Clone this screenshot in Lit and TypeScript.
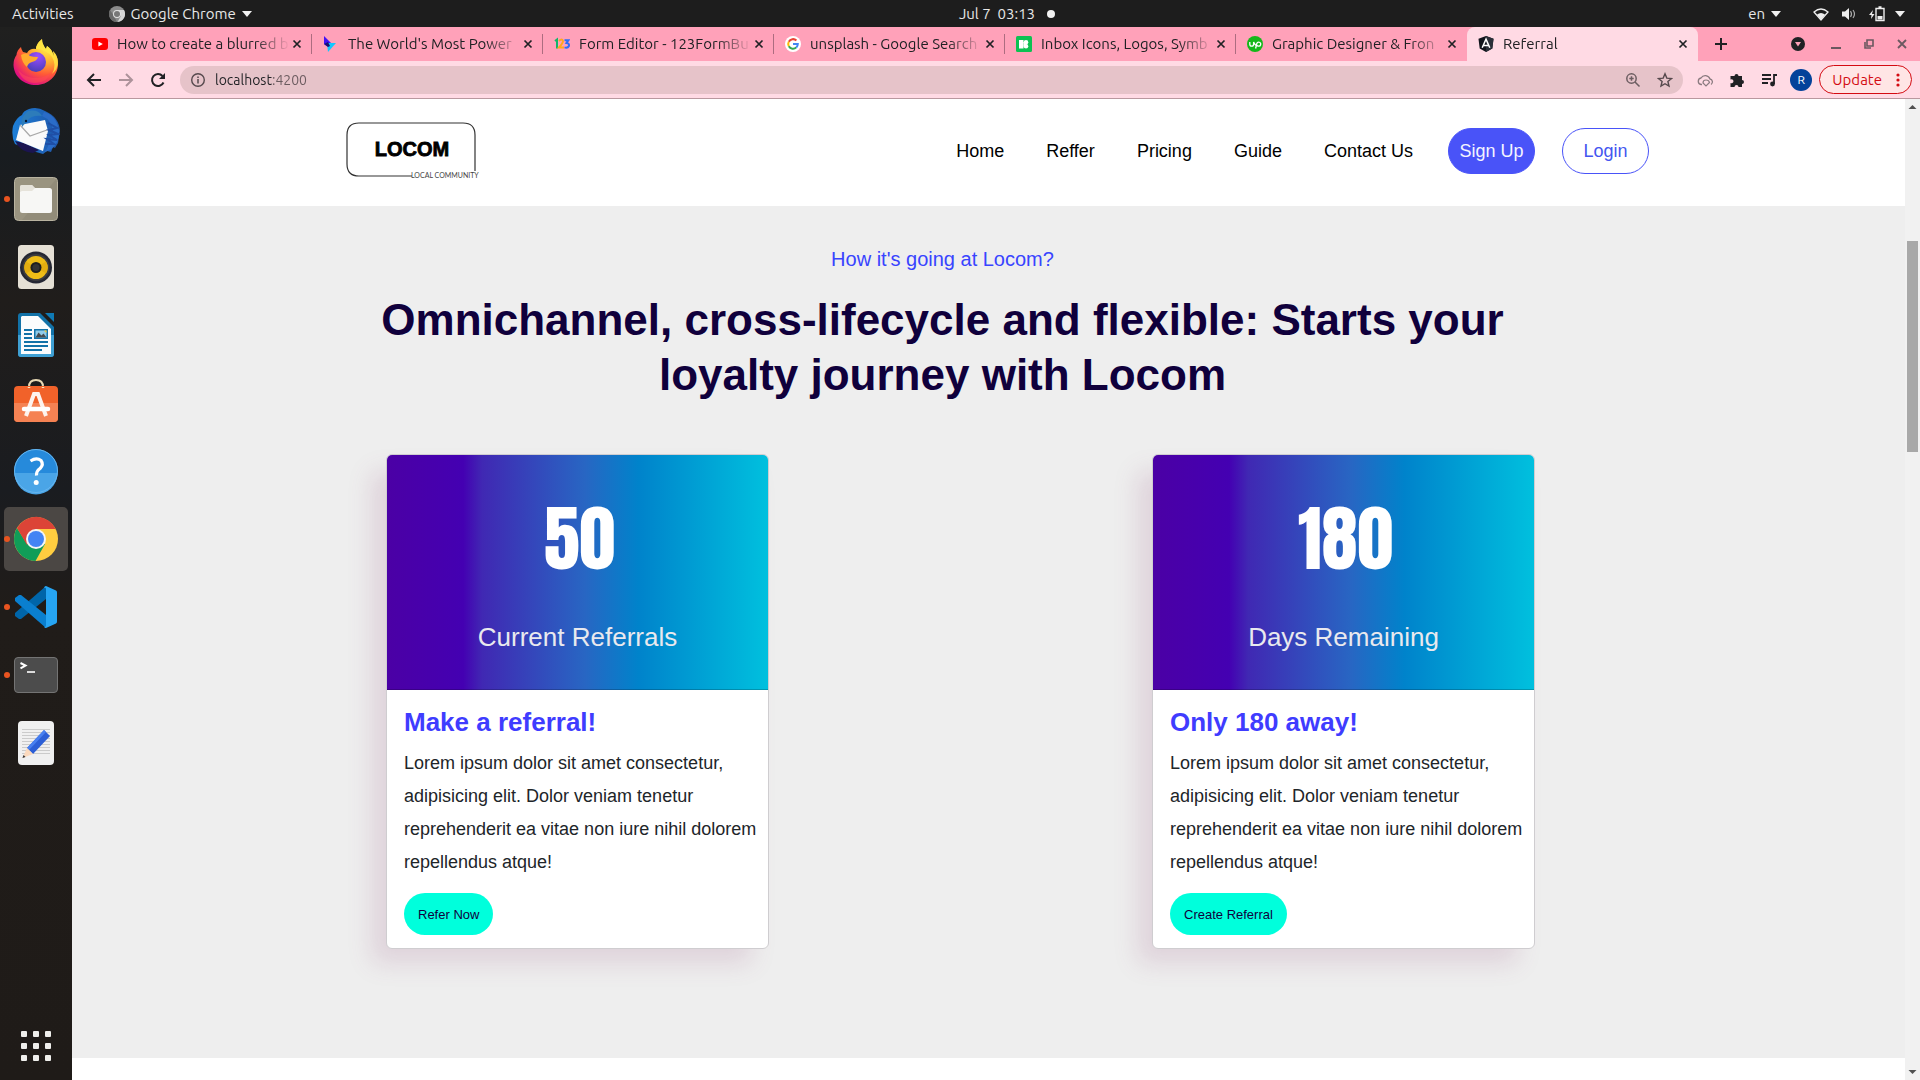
import { LitElement, html, css, svg } from "lit";
import { customElement, property } from "lit/decorators.js";

const tabs = [
  { id: "yt", title: "How to create a blurred b" },
  { id: "wm", title: "The World's Most Power" },
  { id: "fe", title: "Form Editor - 123FormBu" },
  { id: "go", title: "unsplash - Google Search" },
  { id: "i8", title: "Inbox Icons, Logos, Symb" },
  { id: "up", title: "Graphic Designer & Fron" },
  { id: "ng", title: "Referral" },
];

const favicons: Record<string, unknown> = {
  yt: svg`<rect y="2" width="16" height="12" rx="3" fill="#f00"/><path d="M6.4 5.4v5.2L10.8 8z" fill="#fff"/>`,
  wm: svg`<path d="M1 0l7 7-3 4-4-3z" fill="#4311f5"/><path d="M4 7l9 0-8 9z" fill="#10c8ff"/><path d="M1 8l4-2 2 4-2 1z" fill="#1a1173"/>`,
  fe: svg`<path d="M1 5l2-1.500v9" fill="none" stroke="#11b56a" stroke-width="2"/><path d="M5 5q3-3 4 0 0 2-4 6.500h5" fill="none" stroke="#ffa81c" stroke-width="2"/><path d="M10.500 4.200h4L12.500 7q3 .3 2.400 3-1.200 2.400-4.400 1.400" fill="none" stroke="#2f6df6" stroke-width="2"/>`,
  go: svg`<circle cx="8" cy="8" r="8" fill="#fff"/><path d="M11.400 4.500A4.800 4.800 0 0 0 3.800 5.700" fill="none" stroke="#ea4335" stroke-width="2"/><path d="M3.800 5.700a4.800 4.800 0 0 0 0 4.600" fill="none" stroke="#fbbc05" stroke-width="2"/><path d="M3.800 10.300a4.800 4.800 0 0 0 7.500 1.100" fill="none" stroke="#34a853" stroke-width="2"/><path d="M8 8h4.800q0 2-1.500 3.400" fill="none" stroke="#4285f4" stroke-width="2"/>`,
  i8: svg`<rect width="16" height="16" rx="1.500" fill="#0dc152"/><rect x="3" y="4" width="4.500" height="8.500" fill="#fff"/><circle cx="10" cy="6.200" r="2.300" fill="#fff"/><circle cx="10" cy="10.200" r="2.300" fill="#fff"/><path d="M7.500 6h3v4h-3z" fill="#fff"/>`,
  up: svg`<circle cx="8" cy="8" r="8" fill="#14b81a"/><path d="M2.800 6v2.300a1.900 1.900 0 0 0 3.800 0V6q1.400 3 3 4M8.600 12.500l1.200-5a2 2 0 1 1 1.400 2.600q-1-.1-2.300-1.600" fill="none" stroke="#fff" stroke-width="1.300"/>`,
  ng: svg`<path d="M8 0l7.500 2.700-1.200 9.800L8 16l-6.300-3.500L.5 2.700z" fill="#11151c"/><path d="M8 0l7.500 2.700-1.200 9.800L8 16z" fill="#2a2f38"/><path d="M4.200 11.800L8 3.200l3.800 8.600M5.500 9.400h5" fill="none" stroke="#fff" stroke-width="1.500"/>`,
};

const dockApps = [
  {
    name: "Firefox",
    art: svg`<defs><radialGradient id="ff" cx=".75" cy=".15" r="1"><stop offset="0" stop-color="#fff44f"/><stop offset=".35" stop-color="#ffb030"/><stop offset=".62" stop-color="#ff5a36"/><stop offset=".9" stop-color="#e0117f"/></radialGradient><radialGradient id="ffg" cx=".6" cy=".2" r=".8"><stop offset="0" stop-color="#9b4dff"/><stop offset="1" stop-color="#4a3fb8"/></radialGradient></defs>
      <g transform="translate(0 -1)"><path d="M30 1q-6 5-6 10-6-1-9 4l-4-1Q9 11 9 9 5 12 4.500 17 1.500 21 1.500 27C2 39 12 47 24 47s22-9 22-21q0-8-5-13l1 5Q39 10 35 8L34 11Q30 6 30 1z" fill="url(#ff)"/>
      <path d="M30 1q-6 5-6 10 10 0 16 8 5 8 0 17 6-5 6-12 0-6-5-11l1 5Q39 10 35 8L34 11Q30 6 30 1z" fill="#ffe743" opacity=".8"/>
      <circle cx="24" cy="24" r="10" fill="url(#ffg)"/><path d="M9 17q6-3 9 1 3 1 8 1-1 4-6 5-4 1-5 5-5-4-6-12z" fill="#ffab2d"/><path d="M6 32q8 9 20 8 9-1 13-6-4 11-16 11Q11 45 6 32z" fill="#ff4b55" opacity=".55"/></g>`,
  },
  {
    name: "Thunderbird",
    art: svg`<defs><linearGradient id="tb" x1="0" x2="1"><stop offset="0" stop-color="#1d7fd8"/><stop offset="1" stop-color="#1f55a8"/></linearGradient></defs>
      <path d="M17 2Q25-1 33 4q14 6 15 20l-2 12-3 5-2-1-2 5-4-1-4 3-14-4-14-6Q-1 29 1 19q3-8 9-11 1-4 7-6z" fill="url(#tb)"/><path d="M3 34l9 2 15 7-6 3Q8 45 3 34z" fill="#1b1450"/><path d="M8 18L33 13l3 11-5 20L4 33z" fill="#fafafa"/><path d="M8 18l10 11 17-6" fill="none" stroke="#a8a8a8" stroke-width="1.200"/><path d="M10 19Q8 10 16 4q10-2 14 5-11-1-15 5l-5 6z" fill="#2d7cba"/><path d="M30 9q10 4 11 16-2 9-8 20 15-5 14-22Q44 8 32 5z" fill="#2a6cc8"/><path d="M36 16l9 5-8 2 9 4-9 1 8 5-10-1 7 5-9 0" fill="none" stroke="#1f4fa6" stroke-width="2"/><circle cx="14" cy="14" r="1.200" fill="#08172f"/>`,
  },
  {
    name: "Files",
    running: true,
    art: svg`<rect x="2.500" y="2.500" width="43" height="43" rx="4" fill="#9a9480" stroke="#b9b3a0"/><path d="M45 3v42H10z" fill="#857f6d" opacity=".35"/><path d="M8 12q0-2 2-2h10l3 3h15v6H8z" fill="#dedad0"/><rect x="8" y="13" width="32" height="25" rx="2.500" fill="#f7f7f5"/><path d="M8 17V12q0-2 2-2h10l3 3-3 3H10z" fill="#e6e3da"/>`,
  },
  {
    name: "Rhythmbox",
    art: svg`<rect x="6" y="2" width="36" height="44" rx="3.500" fill="#e5e0d5"/><circle cx="24" cy="24.500" r="16" fill="#252733"/><circle cx="24" cy="24.500" r="13.500" fill="#3d3d3f"/><circle cx="24" cy="24.500" r="11.500" fill="#eebc17"/><path d="M24 24.500L14 18.500a11.500 11.500 0 0 0 0 12z M24 24.500l10-6a11.500 11.500 0 0 1 0 12z" fill="#e3ad10"/><circle cx="24" cy="24.500" r="5.500" fill="#1f1f1f"/><circle cx="24" cy="24.500" r="3.500" fill="#343434"/>`,
  },
  {
    name: "LibreOffice Writer",
    art: svg`<path d="M9 2h19l14 14v27q0 3-3 3H9q-3 0-3-3V5q0-3 3-3z" fill="#1272a8"/><path d="M6 24h36v19q0 3-3 3H9q-3 0-3-3z" fill="#3fa0d3"/><path d="M10 5h16l13 13v25H9V6z" fill="#fbfcfd"/><path d="M33 2h9v9z" fill="#0f7ab5"/><path d="M12 19h8M12 23h8M12 27h8M12 31h24M12 35h24M12 39h18" stroke="#1272a8" stroke-width="2"/><rect x="22" y="18" width="14" height="10" fill="#1272a8"/><rect x="23.500" y="19.500" width="11" height="7" fill="#8fcbe9"/><path d="M23.500 26.500l3-5 3 3 2-2 3 4z" fill="#454b50"/><path d="M32 19.500h2.500V22z" fill="#f7c62b"/>`,
  },
  {
    name: "Ubuntu Software",
    art: svg`<path d="M17 11V8q0-7 7-7t7 7v3" fill="none" stroke="#e8d9b4" stroke-width="2"/><rect x="2" y="7" width="44" height="36" rx="4" fill="#f1622a"/><path d="M2 24h44v15q0 4-4 4H6q-4 0-4-4z" fill="#f58253"/><path d="M17 9V8M31 9V8" stroke="#f6e7c2" stroke-width="2.500"/><path d="M14 37l8-22h4l8 22" fill="none" stroke="#fdf3ee" stroke-width="4"/><path d="M12 30h24" stroke="#fff" stroke-width="4.500" stroke-linecap="round"/>`,
  },
  {
    name: "Help",
    art: svg`<circle cx="24" cy="24" r="22" fill="#268adb"/><path d="M2.500 26h43a21.500 21.500 0 0 1-43 0z" fill="#4aa5e7"/><circle cx="24" cy="24" r="21.500" fill="none" stroke="#66b5ee"/><path d="M18.500 14q6-4 10.500-.5 3 4-1 8-4 3-3.500 7" fill="none" stroke="#fff" stroke-width="3.200"/><circle cx="24.200" cy="35.500" r="2.500" fill="#fff"/>`,
  },
  {
    name: "Google Chrome",
    running: true,
    active: true,
    art: svg`<circle cx="24" cy="24" r="22" fill="#ffcd40"/><path d="M5 13A22 22 0 0 0 23.500 46L33 29 14.500 28z" fill="#109d58"/><path d="M5 13l10 17 9-16h19.800A22 22 0 0 0 5 13z" fill="#dc4437"/><circle cx="24" cy="24" r="10" fill="#f5f5f5"/><circle cx="24" cy="24" r="8" fill="#4384f4"/>`,
  },
  {
    name: "Visual Studio Code",
    running: true,
    art: svg`<path d="M34 3L3 30v3l4 3 2 0L34 16z" fill="#0065a9"/><path d="M34 45L3 18v-3l4-3 2 0L34 32z" fill="#0a7fcf"/><path d="M34 3l10 4.500Q45 8 45 9.500v29q0 1.500-1 2L34 45q-1.500 0-2-1.500 2 1 2-1V6q0-2-2-1 .5-2 2-2z" fill="#26a5f3"/>`,
  },
  {
    name: "Terminal",
    running: true,
    art: svg`<rect x="2.500" y="6.500" width="43" height="35" rx="3.500" fill="#4c4c4c" stroke="#747474"/><path d="M8.500 12l5 2.500-5 2.800" fill="none" stroke="#fff" stroke-width="2"/><path d="M15 21h8" stroke="#fff" stroke-width="1.600"/>`,
  },
  {
    name: "Text Editor",
    art: svg`<rect x="6" y="2" width="36" height="44" rx="4" fill="#f0f0f0"/><path d="M10 10.500h28M10 13.500h28M10 16.500h28M10 19.500h28M10 22.500h28M10 25.500h28M10 28.500h28M10 31.500h28M10 34.500h28" stroke="#cbcbcb"/><path d="M32 11l6 6-17 18-6-6z" fill="#2c5fd6"/><path d="M32 11l2 2-17 18-2-2z" fill="#477ff0"/><path d="M15 29l6 6-10.500 4z" fill="#fbd9bd"/><path d="M10.500 39l1-3 2 2z" fill="#333"/>`,
  },
];

const uiFont = css`Ubuntu, "Noto Sans", "Open Sans", sans-serif`;

@customElement("top-bar")
class TopBar extends LitElement {
  static styles = css`
    :host { display: block; }
    .bar { display: grid; grid-template-columns: 1fr auto 1fr; align-items: center; height: 27px; background: #1d1d1d; color: #e8e8e8; font: 15px/27px ${uiFont}; }
    .side { display: flex; align-items: center; padding: 0 12px; }
    .end { justify-content: flex-end; gap: 8px; padding: 0 15px; }
    button { all: unset; display: flex; align-items: center; gap: 6px; }
    .app { margin-left: 35px; }
    .lang { margin-right: 24px; }
    .clock { gap: 12px; margin-left: 94px; }
    .dot { width: 8px; height: 8px; border-radius: 50%; background: #f2f2f2; }
    svg { display: block; }
  `;
  render() {
    const caret = html`<svg width="10" height="6" aria-hidden="true"><path d="M0 0h10L5 6z" fill="#f2f2f2"/></svg>`;
    return html`<header class="bar">
      <div class="side">
        <button>Activities</button>
        <button class="app"><svg width="16" height="16" viewBox="0 0 16 16"><circle cx="8" cy="8" r="8" fill="#8b8b8b"/><path d="M8 4h7a8 8 0 0 1-6.500 12L12 10z" fill="#d5d5d5"/><path d="M1 4l4 6 3 6A8 8 0 0 1 1 4z" fill="#6a6a6a"/><circle cx="8" cy="8" r="4" fill="#e0e0e0"/><circle cx="8" cy="8" r="3" fill="#777"/></svg>Google Chrome <svg width="10" height="6" aria-hidden="true"><path d="M0 0h10L5 6z" fill="#f2f2f2"/></svg></button>
      </div>
      <button class="clock">Jul 7&nbsp; 03:13 <span class="dot"></span></button>
      <div class="side end">
        <button class="lang">en ${caret}</button>
        <button aria-label="System menu"><svg width="92" height="18" viewBox="0 0 92 18"><path d="M1 7q7-6 14 0l-7 8z" fill="none" stroke="#eee" stroke-width="1.300"/><path d="M4 9.500q4-3 8 0L8 15z" fill="#eee"/><path d="M29 6.500h3l4-3.500v12l-4-3.500h-3z" fill="#eee"/><path d="M37.500 6q2 3 0 6M40 5q3 4 0 8" fill="none" stroke="#aaa" stroke-width="1.200"/><path d="M60 5l-4 5h2.500l-.5 4 3.500-5H59z" fill="#eee"/><path d="M63 3.500h8v12h-8zM65.500 2h3" fill="none" stroke="#eee" stroke-width="1.400"/><path d="M64.500 11h5v3.500h-5z" fill="#eee"/><path d="M82 6h10l-5 6z" fill="#eee"/></svg></button>
      </div>
    </header>`;
  }
}

@customElement("app-dock")
class AppDock extends LitElement {
  static styles = css`
    :host { display: block; }
    nav { display: flex; flex-direction: column; align-items: center; gap: 4px; box-sizing: border-box; width: 72px; height: 100%; padding: 4px 0 2px; background: linear-gradient(#20201f, #181c20 12%, #201d1b 26%, #1a1c20 44%, #201c19 55%, #1f1b18); }
    button { all: unset; position: relative; display: grid; place-items: center; width: 64px; height: 64px; border-radius: 5px; }
    .active { background: #4b4744; }
    .running::before { content: ""; position: absolute; left: 0; top: 29px; width: 6px; height: 6px; border-radius: 50%; background: #e95420; }
    .apps { margin-top: auto; }
    svg { display: block; }
  `;
  render() {
    return html`<nav aria-label="Dock">
      ${dockApps.map((a) => html`<button aria-label=${a.name} class="${a.active ? "active" : ""} ${a.running ? "running" : ""}"><svg width="48" height="48" viewBox="0 0 48 48">${a.art}</svg></button>`)}
      <button class="apps" aria-label="Show applications"><svg width="30" height="30" viewBox="0 0 30 30" fill="#efefec">${[0, 12, 24].map((y) => [0, 12, 24].map((x) => svg`<rect x=${x} y=${y} width="6" height="6" rx="1"/>`))}</svg></button>
    </nav>`;
  }
}

@customElement("browser-chrome")
class BrowserChrome extends LitElement {
  static styles = css`
    :host { display: block; font: 15px/20px ${uiFont}; color: #202124; }
    svg { display: block; flex: none; }
    button { all: unset; display: grid; place-items: center; flex: none; }
    .strip { display: flex; height: 34px; padding-left: 9px; background: #ffa1b9; }
    .tab { display: flex; align-items: center; box-sizing: border-box; flex: 0 1 231px; min-width: 0; padding: 0 8px 0 11px; position: relative; }
    .tab:not(.on)::after { content: ""; position: absolute; right: 0; top: 7px; width: 1px; height: 20px; background: #ad6c80; }
    .tab.beforeon::after { display: none; }
    .tab.on { background: #ffdae4; border-radius: 8px 8px 0 0; }
    .title { flex: 1; margin-left: 9px; overflow: hidden; white-space: nowrap; -webkit-mask: linear-gradient(90deg, #000 calc(100% - 36px), transparent); }
    .x { width: 14px; height: 14px; }
    .plus { width: 46px; }
    .win { display: flex; margin: 0 2px 0 auto; }
    .win button { width: 33px; }
    .win button:first-child { width: 42px; }
    .bar { display: flex; align-items: center; height: 37px; padding: 0 8px 0 6px; border-bottom: 1px solid #b9989f; background: #ffdae4; }
    .nav { width: 32px; height: 32px; }
    .omni { display: flex; align-items: center; flex: 1; gap: 9px; height: 28px; margin: 0 6px; padding: 0 8px 0 10px; border-radius: 14px; background: #e6c3c9; }
    .omni button { width: 20px; margin-left: 3px; }
    input { flex: 1; min-width: 0; height: 20px; margin: 0; padding: 0; border: 0; outline: 0; background: linear-gradient(90deg, #202124 57px, #6a5a5e 57px); -webkit-background-clip: text; background-clip: text; color: transparent; font: 14px/20px ${uiFont}; }
    .avatar { width: 22px; height: 22px; margin: 0 7px 0 5px; border-radius: 50%; background: #04429a; color: #fff; font: 12px/22px ${uiFont}; }
    .update { display: flex; align-items: center; gap: 14px; box-sizing: border-box; height: 29px; padding: 0 11px 0 12px; border: 1px solid #d40b12; border-radius: 15px; background: #ffe5e5; color: #d40b12; }
  `;
  render() {
    return html`
      <div class="strip">
        ${tabs.map((t, i) => html`<div class="tab ${i === 6 ? "on" : i === 5 ? "beforeon" : ""}"><svg width="16" height="16" viewBox="0 0 16 16">${favicons[t.id]}</svg><span class="title">${t.title}</span><button class="x" aria-label="Close tab"><svg width="14" height="14"><path d="M3.500 3.500l7 7M10.500 3.500l-7 7" stroke="#202124" stroke-width="1.700"/></svg></button></div>`)}
        <button class="plus" aria-label="New tab"><svg width="14" height="14"><path d="M7 1v12M1 7h12" stroke="#202124" stroke-width="2"/></svg></button>
        <div class="win">
          <button aria-label="Search tabs"><svg width="14" height="14"><circle cx="7" cy="7" r="7" fill="#202124"/><path d="M4 5h6l-3 4.500z" fill="#ffa1b9"/></svg></button>
          <button aria-label="Minimize"><svg width="12" height="12"><path d="M1 10h10" stroke="#6b5860" stroke-width="2"/></svg></button>
          <button aria-label="Restore"><svg width="12" height="12"><path d="M4 2h6v6H4zM2 4v6h6" fill="none" stroke="#6b5860" stroke-width="1.600"/></svg></button>
          <button aria-label="Close"><svg width="12" height="12"><path d="M2 2l8 8M10 2l-8 8" stroke="#6b5860" stroke-width="1.800"/></svg></button>
        </div>
      </div>
      <div class="bar">
        <button class="nav" aria-label="Back"><svg width="16" height="16"><path d="M15 8H2M8 2L2 8l6 6" fill="none" stroke="#202124" stroke-width="2"/></svg></button>
        <button class="nav" aria-label="Forward"><svg width="16" height="16"><path d="M1 8h13M8 2l6 6-6 6" fill="none" stroke="#ad929a" stroke-width="2"/></svg></button>
        <button class="nav" aria-label="Reload"><svg width="16" height="16"><path d="M13.500 10.500A6 6 0 1 1 12.500 4" fill="none" stroke="#202124" stroke-width="2"/><path d="M15 1v6H9z" fill="#202124"/></svg></button>
        <div class="omni">
          <svg width="16" height="16"><circle cx="8" cy="8" r="6.300" fill="none" stroke="#56494d" stroke-width="1.400"/><path d="M8 7v4.500M8 4.500v1.500" stroke="#56494d" stroke-width="1.500"/></svg>
          <input aria-label="Address" value="localhost:4200" />
          <button aria-label="Zoom"><svg width="16" height="16"><circle cx="6.500" cy="6.500" r="4.700" fill="none" stroke="#6c5d61" stroke-width="1.500"/><path d="M10 10l4.500 4.500M4.300 6.500h4.400M6.500 4.300v4.400" stroke="#6c5d61" stroke-width="1.500"/></svg></button>
          <button aria-label="Bookmark"><svg width="16" height="16"><path d="M8 1.800l1.800 4.300 4.700.4-3.600 3 1.100 4.600-4-2.400-4 2.400 1.100-4.600-3.600-3 4.700-.4z" fill="none" stroke="#56494d" stroke-width="1.400"/></svg></button>
        </div>
        <button class="nav" aria-label="Cloud extension"><svg width="17" height="16"><path d="M5 12.500H4a3.300 3.300 0 0 1 0-6.500 5 5 0 0 1 9 1 3 3 0 0 1 1 5.500" fill="none" stroke="#8b7b80" stroke-width="1.300"/><path d="M6 11q0-3 3-3t3.500 2.500L9 14z" fill="none" stroke="#8b7b80" stroke-width="1.200"/></svg></button>
        <button class="nav" aria-label="Extensions"><svg width="16" height="16"><path d="M1.500 4h4a2 2 0 1 1 4 0H13v4a2 2 0 1 1 0 4v3H9.500a2 2 0 1 0-4 0h-4v-4a2 2 0 1 0 0-3.500z" fill="#202124"/></svg></button>
        <button class="nav" aria-label="Media"><svg width="17" height="16"><path d="M1 3h9M1 7h9M1 11h6M16 3h-3v9" fill="none" stroke="#202124" stroke-width="1.800"/><circle cx="11.500" cy="12" r="2.400" fill="#202124"/></svg></button>
        <button class="avatar" aria-label="Profile">R</button>
        <button class="update">Update <svg width="4" height="16" fill="#d40b12"><circle cx="2" cy="3" r="1.600"/><circle cx="2" cy="8" r="1.600"/><circle cx="2" cy="13" r="1.600"/></svg></button>
      </div>`;
  }
}

@customElement("referral-card")
class ReferralCard extends LitElement {
  @property() count = "";
  @property() label = "";
  @property() heading = "";
  @property() action = "";
  static styles = css`
    :host { display: block; flex: 0 1 383px; }
    .card { overflow: hidden; border: 1px solid #cfcdd0; border-radius: 6px; background: #fff; box-shadow: -16px 16px 24px -2px rgba(150, 80, 125, 0.17); }
    .top { display: flex; flex-direction: column; align-items: center; height: 234px; border-bottom: 1px solid rgba(0, 0, 0, 0.2); background: linear-gradient(90deg, #4b00a5, #4400b2 20%, #4028b3 25%, #2866c3 52%, #0083cb 66%, #00c0de); }
    .count { margin-top: 30px; padding-left: 4px; color: #fff; font: 72px/108px Anton, Impact, "Liberation Sans Narrow", sans-serif; }
    .label { margin-top: 28px; color: #e9e9ee; font-size: 26px; line-height: 32px; }
    .body { padding: 16px 8px 13px 17px; }
    h2 { margin: 0; color: #3f3cff; font-size: 26px; line-height: 32px; }
    p { margin: 9px 0 14px; color: #212529; font-size: 18px; line-height: 33px; }
    button { display: block; height: 42px; padding: 0 14px; border: 0; border-radius: 21px; background: #00ffdc; color: #10003c; font: 13px "Liberation Sans", Arial, sans-serif; }
  `;
  render() {
    return html`<article class="card">
      <div class="top"><div class="count">${this.count}</div><div class="label">${this.label}</div></div>
      <div class="body"><h2>${this.heading}</h2>
        <p>Lorem ipsum dolor sit amet consectetur, adipisicing elit. Dolor veniam tenetur reprehenderit ea vitae non iure nihil dolorem repellendus atque!</p>
        <button>${this.action}</button></div>
    </article>`;
  }
}

@customElement("app-root")
class AppRoot extends LitElement {
  static styles = css`
    :host { display: flex; flex-direction: column; height: 100vh; overflow: hidden; font-family: "Liberation Sans", Arial, sans-serif; background: #fff; }
    .desk { display: flex; flex: 1; min-height: 0; }
    .window { display: flex; flex: 1; flex-direction: column; min-width: 0; }
    .view { display: flex; flex: 1; min-height: 0; }
    .page { flex: 1; min-width: 0; overflow: hidden; }
    .head { display: flex; align-items: center; justify-content: space-between; box-sizing: border-box; height: 107px; padding: 0 256px 3px 274px; background: #fff; }
    .logo { display: block; }
    .links { display: flex; align-items: center; gap: 42px; font-size: 18px; line-height: 24px; }
    .links a { color: #000; text-decoration: none; }
    .auth { display: flex; gap: 27px; margin-left: -7px; }
    .auth button { box-sizing: border-box; width: 87px; height: 46px; padding: 0; border: 1px solid #4953f8; border-radius: 23px; background: #fff; color: #4456f0; font: inherit; white-space: nowrap; }
    .auth .fill { background: #4953f8; color: #f4f4ff; }
    .intro { box-sizing: border-box; padding-bottom: 109px; background: #eeeeee; }
    .titles { padding: 40px 385px 0 293px; text-align: center; }
    .kicker { margin: 0 0 20px; color: #3844ff; font-size: 20px; line-height: 26px; }
    h1 { margin: 0; color: #10003c; font-size: 44px; line-height: 55px; }
    .cards { display: flex; justify-content: space-between; padding: 52px 370px 0 314px; }
    .scroll { display: flex; flex-direction: column; align-items: center; width: 15px; background: #f1f1f1; }
    .scroll svg { display: block; }
    .track { flex: 1; padding-top: 126px; }
    .thumb { width: 11px; height: 211px; background: #a8a8a8; }
  `;
  render() {
    return html`
      <top-bar></top-bar>
      <div class="desk">
        <app-dock></app-dock>
        <div class="window">
          <browser-chrome></browser-chrome>
          <div class="view">
            <main class="page">
              <header class="head">
                <svg class="logo" width="134" height="58" viewBox="0 0 134 58" role="img" aria-label="Locom">
                  <path d="M66 54H13Q1 54 1 42V13Q1 1 13 1H117Q129 1 129 13V49" fill="none" stroke="#333" stroke-width="1.200"/>
                  <text x="66" y="34" text-anchor="middle" font-size="20" font-weight="900" stroke="#000" stroke-width="0.800" font-family="Liberation Sans, sans-serif">LOCOM</text>
                  <text x="65" y="56" font-size="7" font-family="Lato, sans-serif" fill="#444">LOCAL COMMUNITY</text>
                </svg>
                <nav class="links">
                  <a href="#home">Home</a><a href="#reffer">Reffer</a><a href="#pricing">Pricing</a><a href="#guide">Guide</a><a href="#contact">Contact Us</a>
                  <div class="auth"><button class="fill">Sign Up</button><button>Login</button></div>
                </nav>
              </header>
              <section class="intro">
                <div class="titles">
                  <p class="kicker">How it's going at Locom?</p>
                  <h1>Omnichannel, cross-lifecycle and flexible: Starts your loyalty journey with Locom</h1>
                </div>
                <div class="cards">
                  <referral-card count="50" label="Current Referrals" heading="Make a referral!" action="Refer Now"></referral-card>
                  <referral-card count="180" label="Days Remaining" heading="Only 180 away!" action="Create Referral"></referral-card>
                </div>
              </section>
            </main>
            <div class="scroll" aria-hidden="true">
              <svg width="15" height="16"><path d="M3.500 10h8l-4-4z" fill="#505050"/></svg>
              <div class="track"><div class="thumb"></div></div>
              <svg width="15" height="16"><path d="M3.500 6h8l-4 4z" fill="#505050"/></svg>
            </div>
          </div>
        </div>
      </div>`;
  }
}
